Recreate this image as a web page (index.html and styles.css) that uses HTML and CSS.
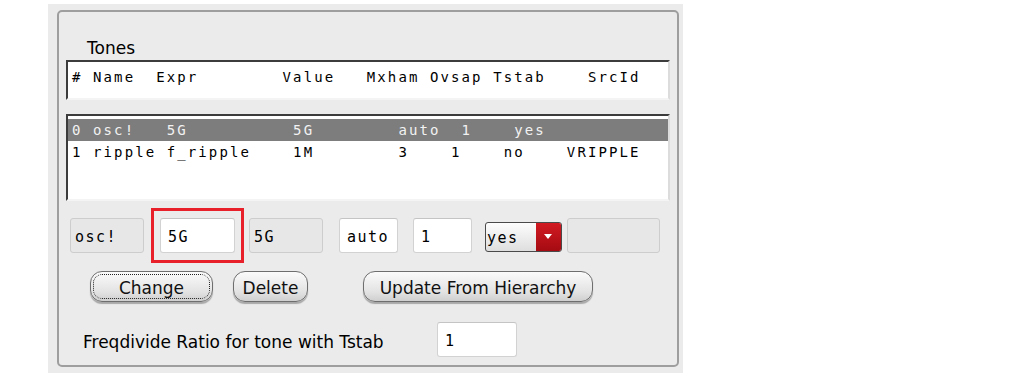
FILE: index.html
```html
<!DOCTYPE html>
<html lang="en">
<head>
    <meta charset="UTF-8">
    <title>Tones</title>
    <link rel="stylesheet" href="styles.css">
</head>
<body>
    <div class="sheet">
        <div class="panel">
            <div class="title">Tones</div>

            <!-- column header box -->
            <div class="listbox header-box">
                <div class="row">#&nbsp;Name  Expr        Value   Mxham Ovsap Tstab    SrcId</div>
            </div>

            <!-- tone rows -->
            <div class="listbox rows-box">
                <div class="row selected">0 osc!   5G          5G        auto  1    yes</div>
                <div class="row">1 ripple f_ripple    1M        3    1    no    VRIPPLE</div>
            </div>

            <div class="fields">
                <div class="field disabled f-name">osc!</div>
                <div class="field f-expr focused">5G</div>
                <div class="field disabled f-value">5G</div>
                <div class="field f-mxham">auto</div>
                <div class="field f-ovsap">1</div>
                <div class="dropdown">
                    <span class="dd-text">yes</span>
                    <span class="dd-arrow"></span>
                </div>
                <div class="field disabled f-src"></div>
            </div>

            <div class="buttons">
                <button class="btn btn-change">Change</button>
                <button class="btn btn-delete">Delete</button>
                <button class="btn btn-update">Update From Hierarchy</button>
            </div>

            <div class="freq-row">
                <span class="freq-label">Freqdivide Ratio for tone with Tstab</span>
                <div class="field f-freq">1</div>
            </div>
        </div>
    </div>
</body>
</html>
```

FILE: styles.css
```css
/* Basic Styles */
body {
    margin: 0;
    background-color: #ffffff;
    font-family: "DejaVu Sans", Verdana, sans-serif;
    font-size: 17px;
    color: #000;
}

.sheet {
    margin: 4px 0 0 48px;
    width: 635px;
    height: 369px;
    background-color: #ebebeb;
    overflow: hidden;
}

.panel {
    box-sizing: border-box;
    margin: 6px 4px 0 9px;
    height: 357px;
    border: 2px solid #9e9e9e;
    border-radius: 5px;
    padding: 26px 7px 0 7px;
}

.title {
    line-height: 20px;
    padding-left: 21px;
}

/* List boxes */
.listbox {
    box-sizing: border-box;
    background-color: #fff;
    border-top: 2px solid #3c3c3c;
    border-left: 2px solid #3c3c3c;
    border-right: 2px solid #dcdcdc;
    border-bottom: 2px solid #f4f4f4;
    font-family: "DejaVu Sans Mono", monospace;
    font-size: 14px;
    letter-spacing: 2.1px;
}

.header-box {
    margin-top: 2px;
    height: 40px;
    padding-top: 4px;
}

.rows-box {
    margin-top: 14px;
    height: 87px;
    padding-top: 3px;
}

.row {
    white-space: pre;
    line-height: 22px;
    padding-left: 4px;
}

.row.selected {
    background-color: #7d7d7d;
    color: #f2f2f2;
}

/* Entry fields */
.fields {
    display: flex;
    align-items: flex-start;
    margin-top: 17px;
    padding-left: 4px;
}

.field {
    box-sizing: border-box;
    height: 35px;
    line-height: 31px;
    padding: 3px 0 0 7px;
    background-color: #fff;
    border: 1px solid #d2d2d2;
    border-top-color: #c4c4c4;
    border-radius: 3px;
    font-family: "DejaVu Sans Mono", monospace;
    font-size: 15px;
    letter-spacing: 1.5px;
}

.field.disabled {
    background-color: #e7e7e7;
    border-color: #cdcdcd;
    padding-left: 4px;
}

/* red highlight square around the edited field */
.field.focused {
    position: relative;
}

.field.focused::after {
    content: "";
    position: absolute;
    top: -11px;
    bottom: -11px;
    left: -10px;
    right: -10px;
    border: 3px solid #e8202a;
}

.f-name  { width: 74px; }
.f-expr  { width: 75px; margin-left: 16px; }
.f-value { width: 74px; margin-left: 14px; }
.f-mxham { width: 59px; margin-left: 16px; }
.f-ovsap { width: 59px; margin-left: 15px; }
.f-src   { width: 93px; margin-left: 5px; }

.dropdown {
    box-sizing: border-box;
    display: flex;
    width: 77px;
    height: 30px;
    margin-top: 4px;
    margin-left: 13px;
    border: 1px solid #4a4a4a;
    border-radius: 3px;
    overflow: hidden;
    background: linear-gradient(#fdfdfd, #dedede);
}

.dd-text {
    flex: 1;
    line-height: 30px;
    padding-left: 1px;
    font-family: "DejaVu Sans Mono", monospace;
    font-size: 15px;
    letter-spacing: 1.5px;
}

.dd-arrow {
    position: relative;
    width: 25px;
    background: linear-gradient(#d21a22, #a50b12);
}

.dd-arrow::after {
    content: "";
    position: absolute;
    left: 8px;
    top: 11px;
    border-left: 4px solid transparent;
    border-right: 4px solid transparent;
    border-top: 5px solid #fff;
}

/* Buttons */
.buttons {
    display: flex;
    margin-top: 18px;
    padding-left: 24px;
}

.btn {
    height: 31px;
    padding: 2px 0 0;
    font-family: "DejaVu Sans", Verdana, sans-serif;
    font-size: 17px;
    color: #111;
    background: linear-gradient(#fbfbfb, #e2e2e2 70%, #cfcfcf);
    border: 1px solid #6e6e6e;
    border-radius: 12px;
    box-shadow: 0 2px 1px #a8a8a8;
}

.btn-change {
    width: 123px;
    outline: 1px dotted #222;
    outline-offset: -4px;
}

.btn-delete {
    width: 75px;
    margin-left: 20px;
}

.btn-update {
    width: 230px;
    margin-left: 55px;
}

/* Freqdivide row */
.freq-row {
    display: flex;
    align-items: center;
    margin-top: 20px;
    padding-left: 17px;
}

.freq-label {
    width: 354px;
    padding-top: 5px;
}

.f-freq {
    width: 80px;
}
```
